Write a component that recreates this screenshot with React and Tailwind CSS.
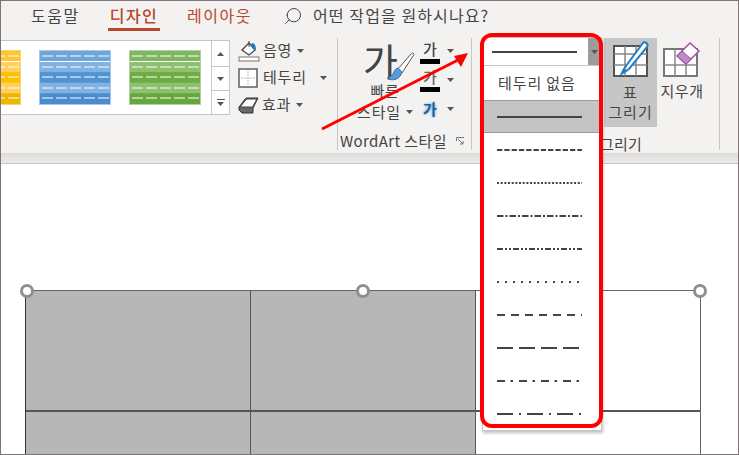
import React from "react";
import { Search } from "lucide-react";

const fontStack = { fontFamily: '"Noto Sans CJK KR", "Noto Sans", sans-serif' };

// table style thumbnails in the gallery
const StyleThumb = ({ bands, edge, className }) => (
  <svg width="72" height="55" viewBox="0 0 72 55" className={className}>
    <rect x="0.5" y="0.5" width="71" height="54" fill={bands[0]} stroke={edge} />
    {bands.map((c, i) => (
      <rect key={i} x="1" y={1 + i * 10.6} width="70" height="10.6" fill={c} />
    ))}
    <line x1="1" x2="71" y1="11.5" y2="11.5" stroke="#fff" />
    {[6, 17, 27, 38, 48].map((y) => (
      <line key={y} x1="3" x2="70" y1={y} y2={y} stroke="#fff" strokeDasharray="11 3" />
    ))}
  </svg>
);

const Caret = ({ className = "" }) => (
  <svg width="7" height="4" viewBox="0 0 7 4" className={className}>
    <path d="M0 0h7L3.5 4z" fill="#555" />
  </svg>
);

const ShadeIcon = () => (
  <svg width="22" height="22" viewBox="0 0 22 22">
    <rect x="1" y="17" width="20" height="4" fill="#fff" stroke="#777" />
    <path d="M4 10 11 3l6 7-6 5z" fill="#fff" stroke="#444" strokeWidth="1.3" />
    <path d="M11 1v6" stroke="#444" />
    <path d="M13 4c3-2 5 1 5 6h-2c0-2-1-4-3-4z" fill="#1f7fc4" />
  </svg>
);

const BorderIcon = () => (
  <svg width="20" height="20" viewBox="0 0 20 20">
    <rect x="1" y="1" width="18" height="18" fill="#fff" stroke="#555" strokeWidth="1.4" />
    <path d="M10 3v14M3 10h14" stroke="#bbb" strokeDasharray="2 1" />
  </svg>
);

const EffectIcon = () => (
  <svg width="21" height="18" viewBox="0 0 21 18">
    <path d="M1 11 8 2h12l-5 10v5H4l-3-3z" fill="#6a6a6a" stroke="#333" />
    <path d="M2 11 8.5 3H19l-4.500 8z" fill="#fff" stroke="#444" />
  </svg>
);

const BrushIcon = ({ className }) => (
  <svg width="30" height="30" viewBox="0 0 30 30" className={className}>
    <path d="M13 17 26 2c2-2 4 0 2 2L17 21z" fill="#fff" stroke="#555" />
    <path d="M13 16c-4 1-4 5-6 7-1 2-3 3-5 3 3 3 13 3 15-6z" fill="#5b9bd5" stroke="#2e75b6" />
  </svg>
);

const DrawTableIcon = () => (
  <svg width="38" height="37" viewBox="0 0 38 37">
    <path d="M2 6h33v30H2z" fill="#fff" stroke="#555" strokeWidth="2" />
    <path d="M2 14h33M2 25h33M13 6v30M24 6v30" stroke="#888" strokeWidth="1.5" />
    <path d="M10 33 14 26 31 3c2-2 6 1 4 4L17 29z" fill="#fff" stroke="#1f7fc4" strokeWidth="2" />
    <path d="M9 35l2-7 5 3z" fill="#1f7fc4" />
  </svg>
);

const EraserIcon = () => (
  <svg width="38" height="37" viewBox="0 0 38 37">
    <path d="M1 9h33v27H1z" fill="#fff" stroke="#777" strokeWidth="2" />
    <path d="M1 25h33M12 9v27M23 9v27" stroke="#888" strokeWidth="1.5" />
    <path d="M14 16 27 3l9 8-13 13z" fill="#fff" stroke="#a349a4" strokeWidth="1.5" />
    <path d="M14 16l5-5 9 8-5 5z" fill="#c08bc9" stroke="#a349a4" />
  </svg>
);

const lineStyles = [
  "5.3 2",
  "2 1.67",
  "6.5 2 2 2",
  "6 2 2 2 2 2",
  "2 6",
  "8 6",
  "16 6",
  "8 5.5 2.5 6",
  "16 6 2 6",
];

const LineSample = ({ dash }) => (
  <svg width="85" height="2" viewBox="0 0 85 2" className="block">
    <line x1="0" x2="85" y1="1" y2="1" stroke="#444" strokeWidth="2" strokeDasharray={dash} />
  </svg>
);

const Handle = ({ className }) => (
  <div className={`absolute w-[14px] h-[14px] rounded-full bg-white border-[3px] border-[#8f8f8f] ${className}`} />
);

const TableCell = ({ gray, className = "" }) => (
  <div className={`border-[#555] ${gray ? "bg-[#b7b7b7]" : "bg-white"} ${className}`} />
);

export default function App() {
  return (
    <div
      style={fontStack}
      className="relative w-[739px] h-[455px] overflow-hidden flex flex-col bg-white border border-[#7d7575] text-[#444] text-[15px]"
    >
      {/* tab row */}
      <div className="h-[37px] shrink-0 flex items-start bg-[#f3f2f1] pl-[30px] text-[16px] leading-[28px] tracking-[1.5px]">
        <span className="w-[77px]">도움말</span>
        <span className="w-[79px] h-[30px] font-medium text-[#b7472a]">
          <span className="inline-block w-[52px] h-[30px] border-b-[3px] border-[#b7472a] text-center">디자인</span>
        </span>
        <span className="w-[96px] text-[#b7472a]">레이아웃</span>
        <Search size={20} strokeWidth={1.2} className="mt-[5px] -scale-x-100" />
        <span className="ml-[10px] tracking-[1.1px]">어떤 작업을 원하시나요?</span>
      </div>

      {/* ribbon */}
      <div className="h-[115px] shrink-0 flex bg-[#f3f2f1]">
        <div className="w-[229px] h-[75px] mt-[2px] flex bg-white border-y border-r border-[#c8c6c4]">
          <div className="flex-1 flex items-center gap-[18px] pl-[38px] relative overflow-hidden">
            <StyleThumb
              className="absolute left-[-52px] top-[9px]"
              bands={["#ffc533", "#ffd15c", "#ffc000", "#ffd15c", "#edb600"]}
              edge="#f6d27c"
            />
            <StyleThumb bands={["#6ea5db", "#82b2e0", "#4f93d4", "#82b2e0", "#4a8ccd"]} edge="#a9c6e6" />
            <StyleThumb bands={["#7fb761", "#8fc06f", "#6dab43", "#8fc06f", "#66a83d"]} edge="#b5cfa6" />
          </div>
          <div className="w-[18px] flex flex-col border-l border-[#c8c6c4]">
            <div className="h-[26px] flex items-center justify-center border-b border-[#c8c6c4]">
              <Caret className="rotate-180" />
            </div>
            <div className="h-[24px] flex items-center justify-center border-b border-[#c8c6c4]">
              <Caret />
            </div>
            <div className="flex-1 flex flex-col items-center justify-center gap-[2px]">
              <div className="w-[8px] h-px bg-[#555]" />
              <Caret />
            </div>
          </div>
        </div>

        <div className="w-[107px] pl-[8px] flex flex-col tracking-[0.8px]">
          <div className="h-[27px] -mt-[1px] flex items-center gap-[3px]">
            <ShadeIcon />
            <span>음영</span>
            <Caret className="ml-[2px]" />
          </div>
          <div className="h-[27px] flex items-center gap-[5px]">
            <BorderIcon />
            <span>테두리</span>
            <Caret className="ml-[8px]" />
          </div>
          <div className="h-[27px] flex items-center gap-[3px]">
            <EffectIcon />
            <span>효과</span>
            <Caret className="ml-[2px]" />
          </div>
        </div>

        <div className="w-px h-[112px] bg-[#c8c6c4]" />

        {/* WordArt */}
        <div className="w-[133px] flex flex-col">
          <div className="h-[94px] flex pl-[13px]">
            <div className="w-[68px] flex flex-col items-center">
              <div className="h-[39px] flex items-start pl-[8px] pt-[3px]">
                <span className="text-[38px] leading-[38px]">가</span>
                <BrushIcon className="mt-[11px] -ml-[13px]" />
              </div>
              <span className="mt-[4px] leading-[20px] tracking-[0.8px]">빠른</span>
              <span className="mt-[1px] flex items-center gap-[5px] leading-[20px] tracking-[0.8px]">
                스타일 <Caret />
              </span>
            </div>
            <div className="flex flex-col pl-[1px] pt-[1px]">
              <div className="h-[29px] flex items-start gap-[7px]">
                <span className="w-[20px] h-[25px] text-center leading-[20px] border-b-[5px] border-black font-medium">가</span>
                <Caret className="mt-[10px]" />
              </div>
              <div className="h-[31px] flex items-start gap-[7px]">
                <span className="w-[20px] h-[24px] text-center leading-[18px] border-b-[5px] border-black font-medium text-[#666]">가</span>
                <Caret className="mt-[10px]" />
              </div>
              <div className="h-[24px] flex items-start gap-[7px]">
                <span className="w-[20px] text-center leading-[20px] font-bold text-[#1f5f99] [text-shadow:0_0_3px_#4ea1ea]">가</span>
                <Caret className="mt-[8px]" />
              </div>
            </div>
          </div>
          <div className="flex items-center pl-[2px] leading-[18px] tracking-[0.4px] whitespace-nowrap">
            WordArt 스타일
            <svg width="9" height="9" viewBox="0 0 9 9" className="ml-[9px]">
              <path d="M.5 4V.5H8M2 2l5 5M7 4v3H4" fill="none" stroke="#777" />
            </svg>
          </div>
        </div>

        <div className="w-px h-[112px] bg-[#c8c6c4]" />

        {/* space under the open line style list */}
        <div className="w-[132px] shrink-0 flex flex-col items-end">
          <div className="h-[89px]" />
          <span className="mt-[10px] leading-[18px] tracking-[0.2px] mr-[-38px]">그리기</span>
        </div>
        <div className="w-[53px] h-[89px] shrink-0 flex flex-col items-center pt-[2px] bg-[#c6c6c6] leading-[20px] tracking-[1px]">
          <DrawTableIcon />
          <span className="mt-[5px]">표</span>
          <span>그리기</span>
        </div>
        <div className="w-[50px] h-[89px] shrink-0 flex flex-col items-center pt-[2px] leading-[20px] tracking-[0.6px]">
          <EraserIcon />
          <span className="mt-[4px]">지우개</span>
        </div>
        <div className="ml-[12px] w-px h-[112px] bg-[#c8c6c4]" />
      </div>

      {/* ribbon shadow */}
      <div className="h-[11px] shrink-0 bg-gradient-to-b from-[#dedddc] to-[#ebebea] border-b border-[#c8c6c4]" />

      {/* slide */}
      <div className="relative flex-1 pl-[24px] pt-[126px]">
        <div className="relative w-[676px] h-[300px] border border-[#666] border-l-[#333] grid grid-cols-[225px_225px_224px] grid-rows-[121px_1fr]">
          <TableCell gray className="border-r border-b-2" />
          <TableCell gray className="border-r border-b-2" />
          <TableCell className="border-b-2" />
          <TableCell gray className="border-r" />
          <TableCell gray className="border-r" />
          <TableCell />
          <Handle className="left-[-6px] top-[-7px]" />
          <Handle className="left-[330px] top-[-7px]" />
          <Handle className="left-[667px] top-[-7px]" />
        </div>
      </div>

      {/* open line style list */}
      <div className="absolute left-[481px] top-[36px] w-[120px] h-[394px] flex flex-col bg-white border border-[#c8c6c4] shadow-[1px_2px_3px_rgba(0,0,0,0.25)]">
        <div className="h-[28px] shrink-0 flex border-b border-[#c8c6c4]">
          <div className="flex-1 flex items-center pl-[9px]">
            <LineSample />
          </div>
          <div className="w-[13px] flex items-center justify-center bg-[#9c9c9c]">
            <Caret />
          </div>
        </div>
        <div className="h-[34px] shrink-0 flex items-center pl-[15px] tracking-[0.9px]">테두리 없음</div>
        <div className="h-[33px] shrink-0 flex items-center pl-[13px] bg-[#c4c4c4] border border-[#999]">
          <LineSample />
        </div>
        {lineStyles.map((dash) => (
          <div key={dash} className="h-[33px] shrink-0 flex items-center pl-[14px]">
            <LineSample dash={dash} />
          </div>
        ))}
      </div>

      {/* annotation drawn over the screenshot */}
      <div className="absolute left-[479px] top-[32px] w-[123px] h-[395px] rounded-[12px] border-[4px] border-[#ff0000]" />
      <svg className="absolute left-0 top-0" width="739" height="455" viewBox="0 0 739 455">
        <line x1="321" y1="128" x2="457" y2="59" stroke="#ff0000" strokeWidth="3" />
        <path d="M467 52 453 55 460 66z" fill="#ff0000" />
      </svg>
    </div>
  );
}
